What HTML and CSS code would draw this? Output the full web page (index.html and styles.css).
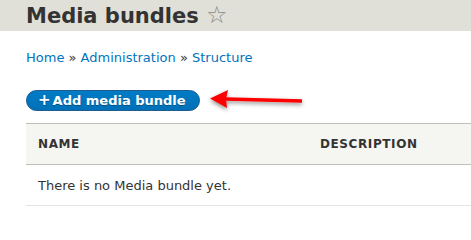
FILE: index.html
```html
<!DOCTYPE html>
<html lang="en">
<head>
  <meta charset="UTF-8">
  <title>Media bundles</title>
  <link rel="stylesheet" href="styles.css">
</head>
<body>
  <div class="page-header">
    <h1 class="page-title">Media bundles <span class="shortcut">&#9734;</span></h1>
  </div>

  <div class="content">
    <nav class="breadcrumb">
      <a href="#">Home</a> &raquo; <a href="#">Administration</a> &raquo; <a href="#">Structure</a>
    </nav>

    <div class="action-links">
      <a class="button-action" href="#"><span class="button-action__plus">+</span>Add media bundle</a>
      <svg class="callout-arrow" width="104" height="30" viewBox="0 0 104 30">
        <defs>
          <filter id="shadow" x="-20%" y="-60%" width="140%" height="220%">
            <feDropShadow dx="0" dy="2" stdDeviation="2" flood-color="#000" flood-opacity="0.45"/>
          </filter>
        </defs>
        <g filter="url(#shadow)">
          <path d="M20 12 L96 14" stroke="#f00" stroke-width="3.5" fill="none"/>
          <path d="M4 11.5 L22 3 L20 12 L21 21 Z" fill="#f00"/>
        </g>
      </svg>
    </div>

    <table class="bundles">
      <thead>
        <tr>
          <th class="col-name">Name</th>
          <th>Description</th>
        </tr>
      </thead>
      <tbody>
        <tr>
          <td colspan="2">There is no Media bundle yet.</td>
        </tr>
      </tbody>
    </table>
  </div>
</body>
</html>
```

FILE: styles.css
```css
* {
  box-sizing: border-box;
}

html, body {
  margin: 0;
  padding: 0;
  background: white;
  color: #333;
  font-family: 'DejaVu Sans', sans-serif;
  font-size: 13px;
  overflow: hidden;
}

a {
  color: #0074bd;
  text-decoration: none;
}

.page-header {
  height: 31px;
  background: #e0e0d8;
  padding-left: 26px;
}

.page-title {
  margin: 0;
  font-size: 21px;
  font-weight: bold;
  line-height: 1;
  padding-top: 3px;
  color: #333;
}

.shortcut {
  font-weight: normal;
  font-size: 24px;
  color: #8a8a84;
}

.content {
  padding-left: 26px;
}

.breadcrumb {
  padding-top: 18px;
  line-height: 18px;
  color: #333;
}

.action-links {
  display: flex;
  align-items: center;
  margin-top: 22px;
  height: 22px;
}

.button-action {
  display: inline-flex;
  align-items: center;
  height: 21px;
  padding: 0 13px 0 11px;
  border-radius: 11px;
  background: #0072b9;
  background-image: linear-gradient(#007bc6, #0071b8);
  border: 1px solid #1e5c90;
  color: white;
  font-weight: bold;
  font-size: 13px;
  text-shadow: 0 1px 0 rgba(0, 0, 0, 0.3);
}

.button-action__plus {
  margin-right: 2px;
  font-size: 15px;
}

.callout-arrow {
  margin-left: 6px;
  margin-top: 4px;
}

.bundles {
  margin-top: 12px;
  width: 600px;
  border-collapse: collapse;
}

.bundles thead th {
  height: 41px;
  background: #f5f5f2;
  border-top: 1px solid #bfbfba;
  border-bottom: 1px solid #bfbfba;
  text-align: left;
  padding: 0 12px;
  font-size: 12px;
  font-weight: bold;
  letter-spacing: 0.6px;
  text-transform: uppercase;
}

.bundles .col-name {
  width: 282px;
}

.bundles td {
  height: 41px;
  padding: 0 12px;
  border-bottom: 1px solid #e6e4df;
}
```
